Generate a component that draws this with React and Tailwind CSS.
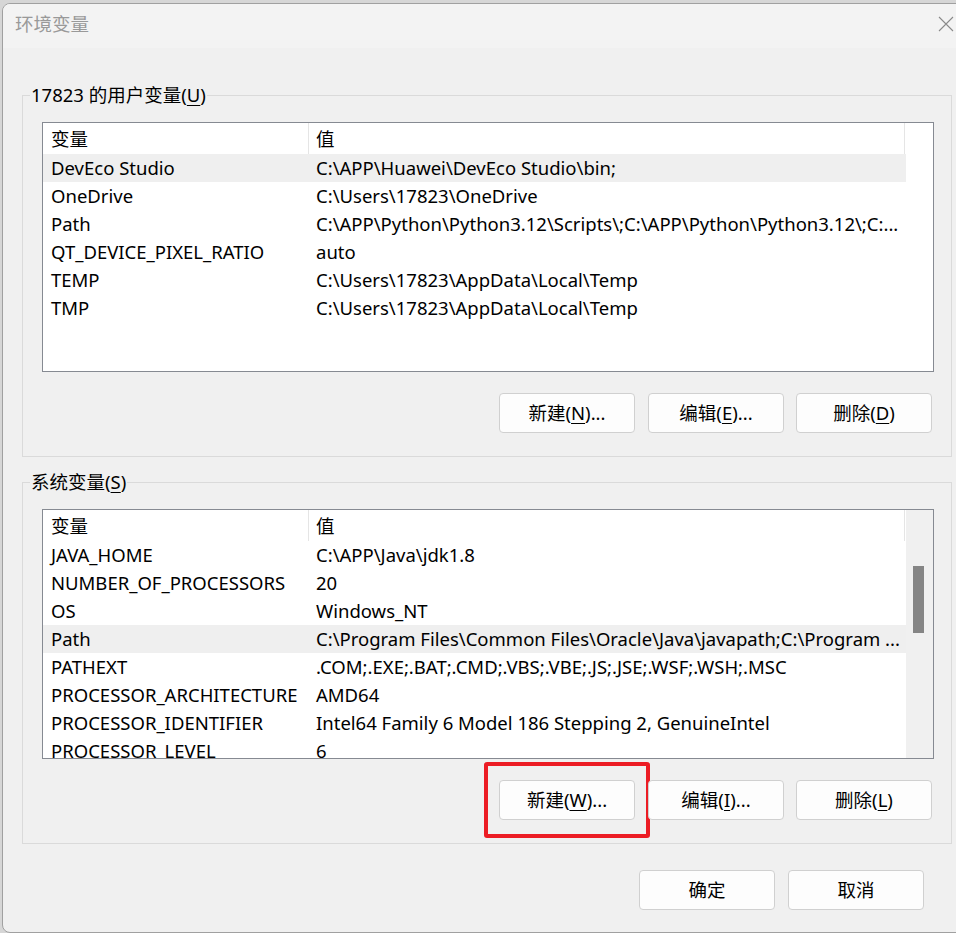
import React from "react";

const userRows = [
  ["DevEco Studio", "C:\\APP\\Huawei\\DevEco Studio\\bin;", true],
  ["OneDrive", "C:\\Users\\17823\\OneDrive"],
  ["Path", "C:\\APP\\Python\\Python3.12\\Scripts\\;C:\\APP\\Python\\Python3.12\\;C:..."],
  ["QT_DEVICE_PIXEL_RATIO", "auto"],
  ["TEMP", "C:\\Users\\17823\\AppData\\Local\\Temp"],
  ["TMP", "C:\\Users\\17823\\AppData\\Local\\Temp"],
];

const sysRows = [
  ["JAVA_HOME", "C:\\APP\\Java\\jdk1.8"],
  ["NUMBER_OF_PROCESSORS", "20"],
  ["OS", "Windows_NT"],
  ["Path", "C:\\Program Files\\Common Files\\Oracle\\Java\\javapath;C:\\Program ...", true],
  ["PATHEXT", ".COM;.EXE;.BAT;.CMD;.VBS;.VBE;.JS;.JSE;.WSF;.WSH;.MSC"],
  ["PROCESSOR_ARCHITECTURE", "AMD64"],
  ["PROCESSOR_IDENTIFIER", "Intel64 Family 6 Model 186 Stepping 2, GenuineIntel"],
  ["PROCESSOR_LEVEL", "6"],
];

function Header() {
  return (
    <div className="flex h-[31px] w-[862px] shrink-0 bg-white">
      <div className="flex w-[266px] items-center border-r border-[#e5e5e5] pl-[8px]">变量</div>
      <div className="flex w-[596px] items-center border-r border-[#e5e5e5] pl-[7px]">值</div>
    </div>
  );
}

function Row({ name, value, sel }) {
  return (
    <div className={"flex h-[28px] w-[863px] shrink-0 items-center " + (sel ? "bg-[#efefef]" : "")}>
      <div className="w-[266px] shrink-0 truncate pl-[8px]">{name}</div>
      <div className="w-[597px] truncate pl-[7px] pr-[4px]">{value}</div>
    </div>
  );
}

function Btn({ label, m, className = "", children }) {
  return (
    <div
      className={
        "relative flex h-[40px] w-[136px] items-center justify-center rounded-[4px] border border-[#d0d0d0] bg-[#fdfdfd] " +
        className
      }
    >
      <span>
        {label}
        {m && (
          <>
            (<u className="underline-offset-[3px]">{m[0]}</u>){m[1]}
          </>
        )}
      </span>
      {children}
    </div>
  );
}

function Group({ title, mnemonic, className = "", children }) {
  return (
    <div className={"w-[930px] border border-[#dadada] " + className}>
      <div className="-mt-[14px] ml-[7px] w-fit bg-[#f0f0f0] px-[1px] leading-[26px]">
        {title}(<u className="underline-offset-[3px]">{mnemonic}</u>)
      </div>
      {children}
    </div>
  );
}

export default function App() {
  return (
    <div className="flex h-[933px] w-[956px] overflow-hidden bg-[#d6d6d6] pl-[2px] pt-[3px] font-['Noto_Sans','Noto_Sans_CJK_SC',sans-serif] text-[18.5px] text-black">
      <div className="flex h-[930px] w-[968px] shrink-0 flex-col overflow-hidden rounded-[8px] border border-[#a0a0a0] bg-[#f0f0f0]">
        {/* title bar */}
        <div className="flex h-[44px] shrink-0 items-start justify-between bg-[#f3f3f3]">
          <div className="pl-[12px] pt-[7px] leading-[26px] text-[#999999]">环境变量</div>
          <div className="flex h-[44px] w-[46px] items-center justify-center">
            <svg width="16" height="16" viewBox="0 0 16 16" className="-mt-[4px] -ml-[1px]">
              <path d="M1 1 L15 15 M15 1 L1 15" stroke="#8a8a8a" strokeWidth="1.1" fill="none" />
            </svg>
          </div>
        </div>

        {/* body */}
        <div className="flex flex-col pl-[19px] pt-[47px]">
          <Group title="17823 的用户变量" mnemonic="U">
            <div className="ml-[19px] mt-[14px] flex h-[250px] w-[892px] border border-[#868a92] bg-white">
              <div className="flex flex-col overflow-hidden">
                <Header />
                {userRows.map(([n, v, s]) => (
                  <Row key={n} name={n} value={v} sel={s} />
                ))}
              </div>
            </div>
            <div className="mt-[21px] flex justify-end pb-[23px] pr-[19px]">
              <Btn label="新建" m={["N", "..."]} />
              <Btn label="编辑" m={["E", "..."]} className="ml-[13px]" />
              <Btn label="删除" m={["D", ""]} className="ml-[12px]" />
            </div>
          </Group>

          <Group title="系统变量" mnemonic="S" className="mt-[25px]">
            <div className="ml-[19px] mt-[14px] flex h-[250px] w-[892px] border border-[#868a92] bg-white">
              <div className="flex w-[863px] flex-col overflow-hidden">
                <Header />
                {sysRows.map(([n, v, s]) => (
                  <Row key={n} name={n} value={v} sel={s} />
                ))}
              </div>
              <div className="flex w-[27px] flex-col bg-[#f0f0f0] pl-[7px] pt-[56px]">
                <div className="h-[67px] w-[11px] bg-[#858585]" />
              </div>
            </div>
            <div className="mt-[21px] flex justify-end pb-[23px] pr-[19px]">
              <Btn label="新建" m={["W", "..."]}>
                <div className="absolute -bottom-[19px] -left-[16px] -right-[16px] -top-[19px] rounded-[3px] border-[4px] border-[#ec1c24]" />
              </Btn>
              <Btn label="编辑" m={["I", "..."]} className="ml-[13px]" />
              <Btn label="删除" m={["L", ""]} className="ml-[12px]" />
            </div>
          </Group>

          <div className="mt-[26px] flex w-[930px] justify-end pr-[28px]">
            <Btn label="确定" />
            <Btn label="取消" className="ml-[13px]" />
          </div>
        </div>
      </div>
    </div>
  );
}
